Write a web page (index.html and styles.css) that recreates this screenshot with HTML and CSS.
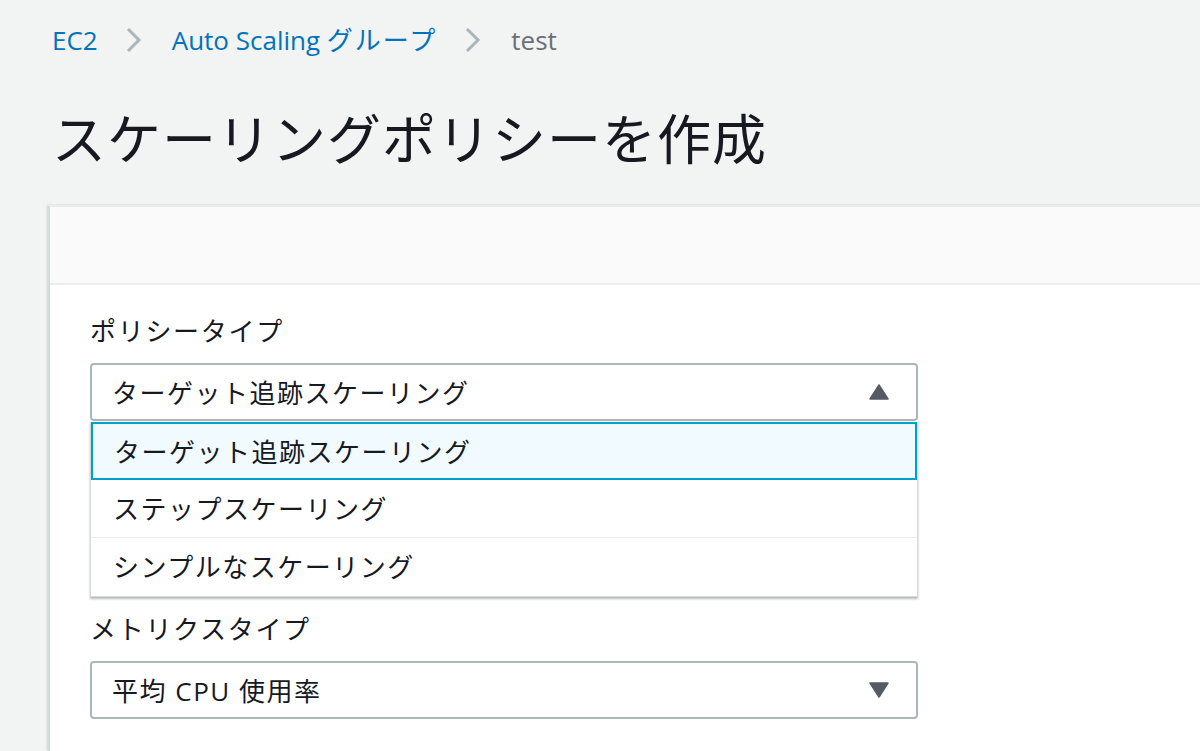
FILE: index.html
```html
<!DOCTYPE html>
<html>
  <head>
    <meta charset="UTF-8" />
    <title>スケーリングポリシーを作成</title>
    <link rel="stylesheet" href="styles.css">
  </head>
  <body>
    <nav class="breadcrumbs">
      <a class="crumb" href="#">EC2</a>
      <svg class="chevron" width="16" height="26" viewBox="0 0 16 26">
        <path d="M2 2 L13 13 L2 24" fill="none" stroke="#aab7b8" stroke-width="3" />
      </svg>
      <a class="crumb" href="#">Auto Scaling <span class="jp">グループ</span></a>
      <svg class="chevron" width="16" height="26" viewBox="0 0 16 26">
        <path d="M2 2 L13 13 L2 24" fill="none" stroke="#aab7b8" stroke-width="3" />
      </svg>
      <span class="crumb current">test</span>
    </nav>

    <h1 class="page-title">スケーリングポリシーを作成</h1>

    <div class="card">
      <div class="card-header"></div>
      <div class="card-body">
        <div class="field">
          <label class="field-label">ポリシータイプ</label>
          <div class="select-wrap">
            <div class="select open">
              <span>ターゲット追跡スケーリング</span>
              <svg class="caret" width="20" height="16" viewBox="0 0 20 16">
                <path d="M10 1 L19 15 L1 15 Z" fill="#545b64" stroke="#545b64" stroke-width="1.5" stroke-linejoin="round" />
              </svg>
            </div>
            <ul class="dropdown">
              <li class="option selected">ターゲット追跡スケーリング</li>
              <li class="option">ステップスケーリング</li>
              <li class="option">シンプルなスケーリング</li>
            </ul>
          </div>
        </div>

        <div class="field metric-field">
          <label class="field-label">メトリクスタイプ</label>
          <div class="select">
            <span>平均 CPU 使用率</span>
            <svg class="caret" width="20" height="16" viewBox="0 0 20 16">
              <path d="M1 1 L19 1 L10 15 Z" fill="#545b64" stroke="#545b64" stroke-width="1.5" stroke-linejoin="round" />
            </svg>
          </div>
        </div>
      </div>
    </div>
  </body>
</html>
```

FILE: styles.css
```css
html,
body {
  margin: 0;
  height: 100%;
  overflow: hidden;
}
body {
  background-color: #f2f3f3;
  font-family: "Open Sans", "Noto Sans CJK JP", sans-serif;
  color: #16191f;
}
.breadcrumbs {
  display: flex;
  align-items: center;
  padding: 22px 0 0 52px;
  height: 36px;
  font-size: 26px;
  line-height: 36px;
}
.crumb {
  color: #0073bb;
  text-decoration: none;
}
.crumb .jp {
  letter-spacing: 2px;
}
.crumb.current {
  color: #687078;
}
.chevron {
  margin: 0 30px 0 28px;
}
.page-title {
  margin: 47px 0 0 52px;
  font-family: "Noto Sans CJK JP", sans-serif;
  font-size: 54px;
  line-height: 64px;
  font-weight: 400;
  letter-spacing: 1px;
  color: #16191f;
}
.card {
  margin: 36px 0 0 48px;
  width: 1200px;
  height: 544px;
  background-color: #ffffff;
  border-top: 2px solid #eaeded;
  border-left: 2px solid #d5dbdb;
  box-shadow: -1px 0 2px rgba(0, 28, 36, 0.15);
}
.card-header {
  height: 76px;
  background-color: #fafafa;
  border-bottom: 2px solid #eaeded;
}
.card-body {
  padding: 27px 0 0 40px;
}
.field {
  display: flex;
  flex-direction: column;
  width: 828px;
}
.field-label {
  font-family: "Noto Sans CJK JP", sans-serif;
  font-size: 26px;
  line-height: 36px;
  letter-spacing: 1.7px;
  margin-bottom: 15px;
}
.select-wrap {
  position: relative;
}
.select {
  display: flex;
  align-items: center;
  justify-content: space-between;
  box-sizing: border-box;
  height: 58px;
  padding: 0 27px 0 20px;
  border: 2px solid #aab7b8;
  border-radius: 4px;
  background-color: #ffffff;
  font-size: 26px;
  color: #16191f;
  letter-spacing: 1.5px;
}
.select span {
  font-family: "Open Sans", "Noto Sans CJK JP", sans-serif;
}
.dropdown {
  position: absolute;
  top: 59px;
  left: 0;
  right: 0;
  margin: 0;
  padding: 0;
  list-style: none;
  background-color: #ffffff;
  border: 1px solid #d5dbdb;
  border-top: none;
  box-shadow: 0 2px 2px rgba(0, 28, 36, 0.3);
  z-index: 2;
}
.option {
  box-sizing: border-box;
  height: 58px;
  line-height: 56px;
  padding-left: 22px;
  font-family: "Noto Sans CJK JP", sans-serif;
  font-size: 26px;
  letter-spacing: 1.5px;
  border-bottom: 1px solid #eaeded;
}
.option:last-child {
  border-bottom: none;
}
.option.selected {
  padding-left: 21px;
  background-color: #f1faff;
  border: 2px solid #00a1c9;
  line-height: 54px;
}
.metric-field {
  margin-top: 189px;
}
```
